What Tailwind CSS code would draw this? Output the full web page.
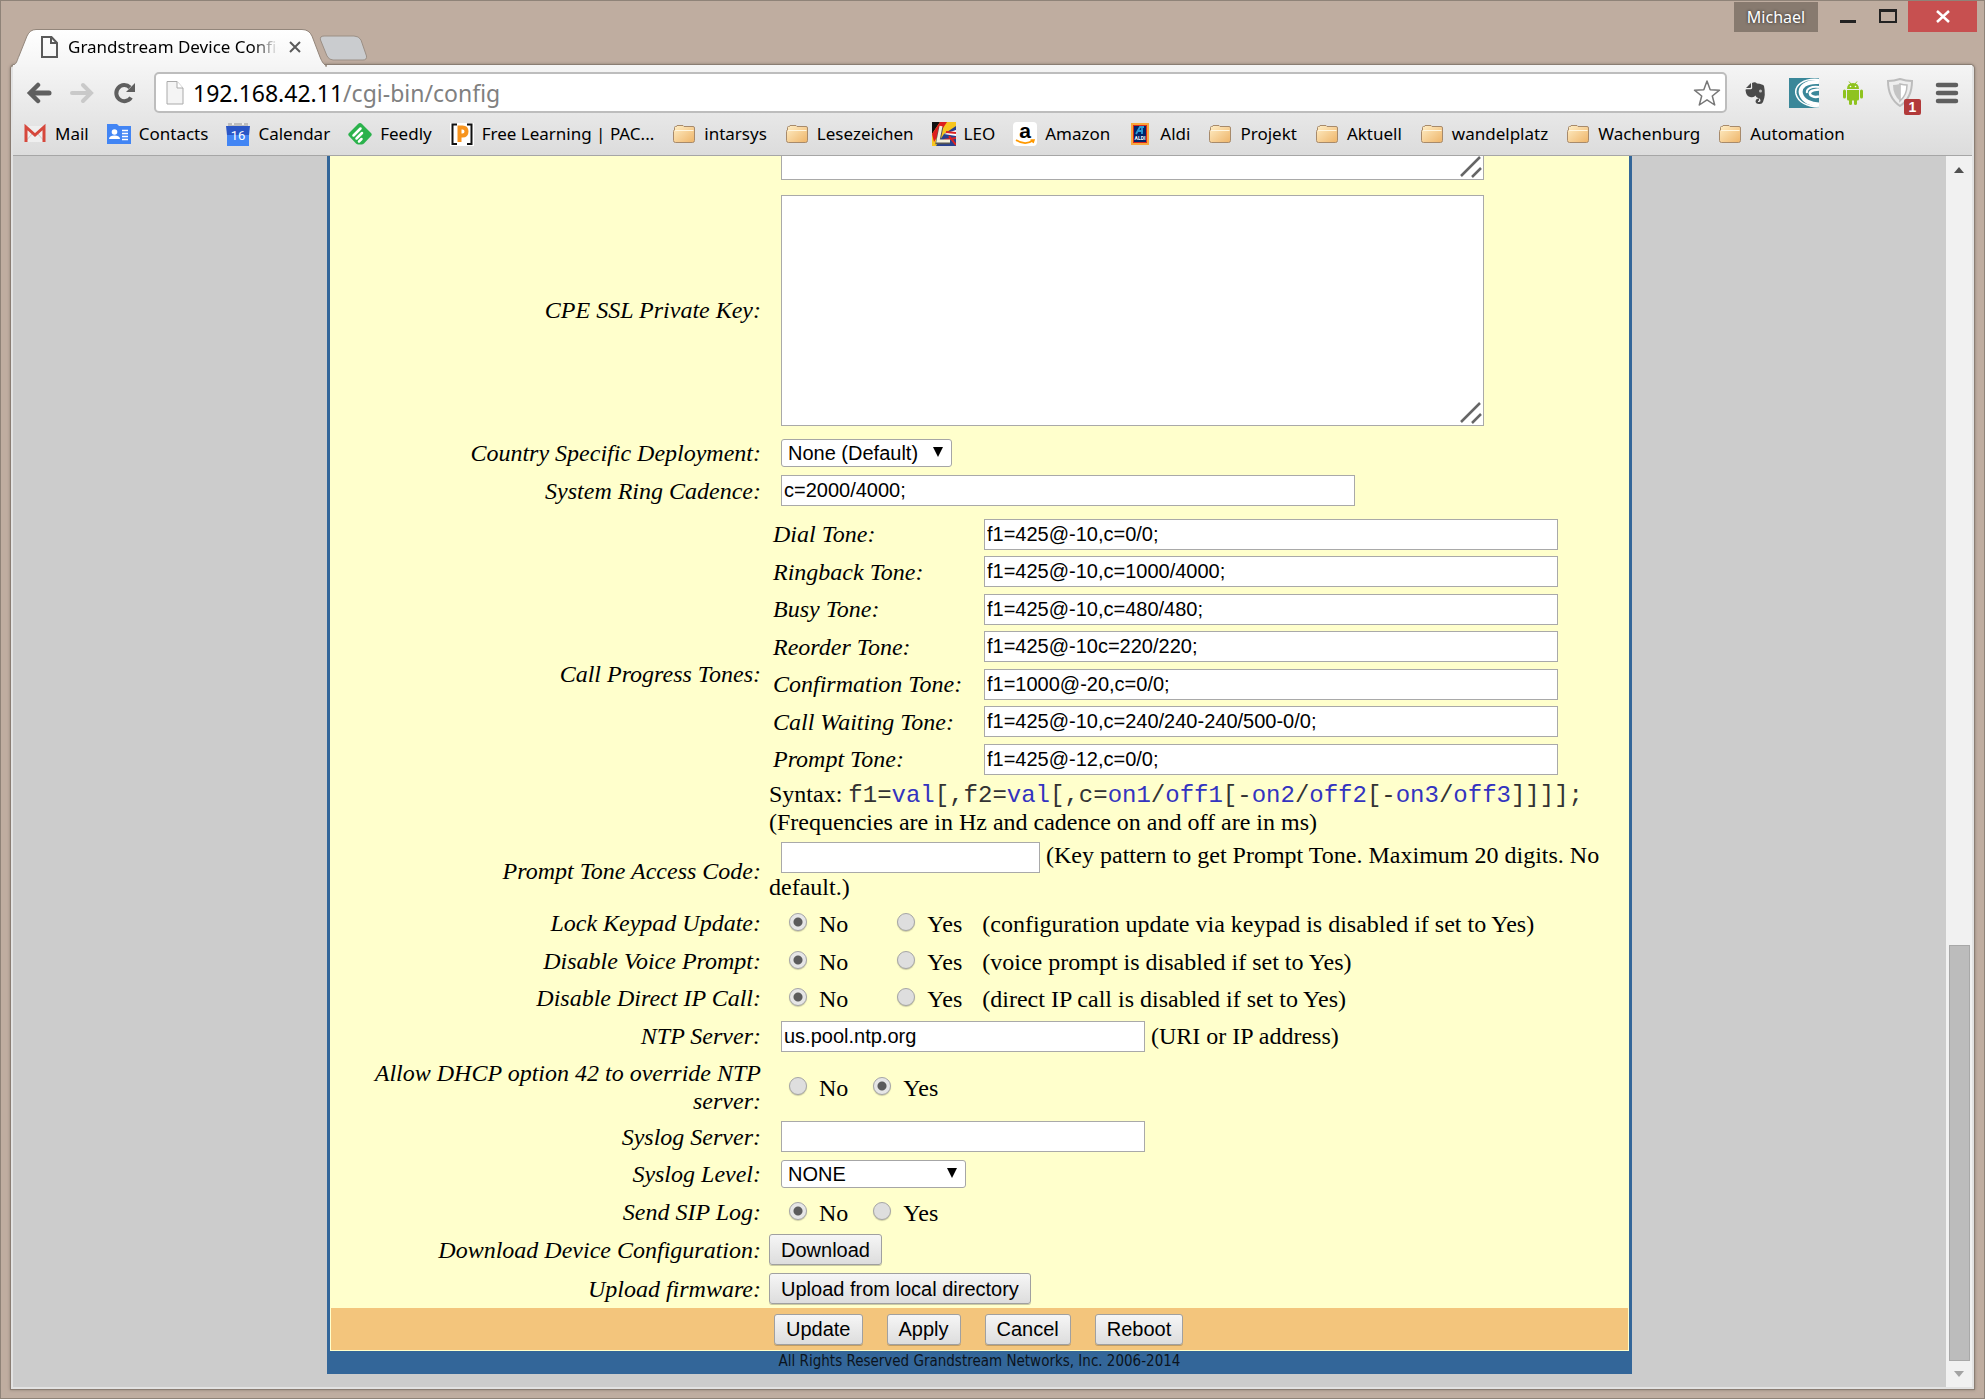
<!DOCTYPE html>
<html lang="en">
<head>
<meta charset="utf-8">
<title>Grandstream Device Configuration</title>
<script src="https://cdn.jsdelivr.net/npm/@tailwindcss/browser@4"></script>
</head>
<body class="bg-[#bfada0]">
<svg class="absolute size-0" aria-hidden="true">
  <defs>
    <linearGradient id="fold" x1="0" y1="0" x2="1" y2="1"><stop offset="0" stop-color="#ffefc8"/><stop offset="1" stop-color="#eeb468"/></linearGradient>
    <linearGradient id="tabfill" x1="0" y1="0" x2="0" y2="1"><stop offset="0" stop-color="#ffffff"/><stop offset="1" stop-color="#f5f5f5"/></linearGradient>
    <symbol id="folder" viewBox="0 0 24 24">
      <path d="M2.500 5.500Q2.500 4.500 3.500 4.500H4.500L5 3.500H11L12 4.500H21Q22.500 4.500 22.500 6V18.500Q22.500 20.500 20.500 20.500H3.500Q1.500 20.500 1.500 18.500V9.500Q1.500 8 2.500 8Z" fill="url(#fold)" stroke="#a78a6b"/>
      <path d="M3 8.500H21.500" stroke="#fff6df" fill="none"/>
    </symbol>
  </defs>
</svg>
<div class="flex min-h-screen flex-col border border-[#8f8378] bg-[#bfada0] font-['Noto_Sans',sans-serif]">
  <!-- Title bar -->
  <header class="flex h-16 shrink-0 items-end justify-between">
    <div class="flex items-end pl-[10px]">
      <div class="relative z-10 flex h-9 w-[316px] items-center pl-[30px]">
        <svg class="absolute left-0 top-0" width="316" height="38" viewBox="0 0 316 38">
          <path d="M0 37C6 36 6 31 8 27L16 7Q19 .5 25 .5H291Q298 .5 301 7L309 28Q312 36 316 37Z" fill="url(#tabfill)" stroke="#93867b"/>
          <path d="M2 37H314" stroke="#f5f5f5" stroke-width="2"/>
        </svg>
        <svg class="relative shrink-0" width="17" height="22" viewBox="0 0 17 22" fill="none" stroke="#5a5a5a" stroke-width="2"><path d="M1 1H10.500L16 7V21H1Z"/><path d="M10 1V7H16"/></svg>
        <span class="relative ml-[10px] w-[210px] overflow-hidden whitespace-nowrap bg-gradient-to-r from-black from-88% to-transparent bg-clip-text text-[17px] leading-6 text-transparent">Grandstream Device Configuration</span>
        <button class="relative ml-[11px]" aria-label="Close tab"><svg width="12" height="12" viewBox="0 0 12 12" stroke="#5a5a5a" stroke-width="2"><path d="M1 1L11 11M11 1L1 11"/></svg></button>
      </div>
      <button class="-ml-2 mb-1" aria-label="New tab"><svg width="49" height="26" viewBox="0 0 49 26"><path d="M5 1H35Q40 1 42 5L47.500 21Q48 25 44 25H14Q10 25 8 21L1.500 5Q.5 1 5 1Z" fill="#cacccf" stroke="#9b8f85"/></svg></button>
    </div>
    <div class="flex self-start pr-[7px]">
      <button class="mt-px h-[30px] w-[84px] bg-[#877a6f] text-[16px] leading-[30px] text-white [text-shadow:0_0_3px_#222]">Michael</button>
      <button class="ml-[22px]" aria-label="Minimize"><svg width="16" height="31" viewBox="0 0 16 31"><path d="M0 19H16V22H0Z" fill="#222"/></svg></button>
      <button class="ml-[23px]" aria-label="Maximize"><svg width="18" height="31" viewBox="0 0 18 31"><path d="M1 9V21H17V9Z" fill="none" stroke="#222" stroke-width="2"/><path d="M0 8H18V11H0Z" fill="#222"/></svg></button>
      <button class="ml-[11px] flex h-[31px] w-[69px] items-center justify-center bg-[#c75050]" aria-label="Close"><svg width="14" height="13" viewBox="0 0 14 13" stroke="#fff" stroke-width="2.500"><path d="M1 1L13 12M13 1L1 12"/></svg></button>
    </div>
  </header>

  <div class="mx-[10px] mb-[9px] flex grow flex-col rounded-t border-x-2 border-b-2 border-[#e2e2e2] shadow-[0_0_0_1px_#8a7d73,0_0_3px_1px_#8a7d73]">
    <!-- Toolbar -->
    <div class="h-[91px] shrink-0 border-b border-[#a6a6a6] bg-gradient-to-b from-[#f5f5f5] to-[#dcdcdc] pt-[7px]">
      <div class="flex items-center pl-3 pr-[13px]">
        <div class="flex gap-[15px] pr-[15px]">
          <button class="flex w-7 justify-center" aria-label="Back"><svg width="26" height="22" viewBox="0 0 26 22" fill="none" stroke="#5f5f5f" stroke-width="5" stroke-linecap="round" stroke-linejoin="miter"><path d="M6 11H23"/><path d="M12 3L4 11L12 19" stroke-width="4.500"/></svg></button>
          <button class="flex w-7 justify-center" aria-label="Forward"><svg width="26" height="22" viewBox="0 0 26 22" fill="none" stroke="#c9c9c9" stroke-width="4" stroke-linecap="round"><path d="M3 11H20"/><path d="M14 3L22 11L14 19"/></svg></button>
          <button class="flex w-7 justify-center" aria-label="Reload"><svg width="24" height="22" viewBox="0 0 24 22"><path d="M18 15.500A8 8 0 1 1 17 5.500" fill="none" stroke="#5f5f5f" stroke-width="4"/><path d="M22 1V10H13Z" fill="#5f5f5f"/></svg></button>
        </div>
        <div class="flex h-[41px] grow items-center rounded-[5px] border-2 border-[#bdbdbd] bg-white pl-[10px] pr-1">
          <svg class="shrink-0" width="18" height="24" viewBox="0 0 18 24" fill="#f4f4f4" stroke="#aaa"><path d="M1 .5H11L17 7V23H1Z"/><path d="M11 .5V7H17" fill="#fff"/></svg>
          <div class="ml-[9px] grow text-[23px] leading-8 text-[#808080]" role="textbox" aria-label="Address"><span class="text-black">192.168.42.11</span>/cgi-bin/config</div>
          <button aria-label="Bookmark this page"><svg width="28" height="28" viewBox="0 0 28 28" fill="#fff" stroke="#777" stroke-width="1.500" stroke-linejoin="round"><path d="M14 2L17.200 10.800L26.500 11.200L19.300 17L21.700 26L14 20.800L6.300 26L8.700 17L1.500 11.200L10.800 10.800Z"/></svg></button>
        </div>
        <div class="ml-4 flex items-center gap-[22px]">
          <button aria-label="Evernote"><svg width="24" height="24" viewBox="0 0 24 24" fill="#4a4a4a"><path d="M3 7L8 2V6Q8 7 7 7ZM9 2Q12 .5 14 2.500Q20 3 21 5Q23 14 20 21Q19 23.500 16 23Q12.500 23 12.500 20Q13 17 16 17.500V19.500Q14.500 19.500 15 21Q18 21.500 17.500 19Q17 17 14 16.500Q13 16 12.500 14.500Q11 17 7 16Q3 15 2.500 9Q2.500 8.200 3.500 8.200H8Q9.200 8 9.200 7Z"/><circle cx="17.500" cy="10" r="1.500" fill="#bbb"/></svg></button>
          <button aria-label="Extension"><svg width="30" height="30" viewBox="0 0 30 30"><path d="M0 0H30V30H0Z" fill="#3a8799"/><g fill="none" stroke="#fff"><path d="M30 1.500C15 0 5 7 7 16C9 24 18 28.500 30 29" stroke-width="1.500"/><path d="M30 4C17 3 10 9 12 16C14 23 22 26.500 30 26.500" stroke-width="4"/><path d="M30 9C22 8 17 11 18 15" stroke-width="2"/><path d="M30 18.500C25 20 20 17.500 21 14.500C23 11.500 27 12 30 11.500" stroke-width="2.500"/></g></svg></button>
          <button aria-label="Android"><svg width="24" height="26" viewBox="0 0 24 26" fill="#8fc31f"><path d="M6 9Q6 3 12 3T18 9ZM6 10H18V19Q18 20.500 16.500 20.500H7.500Q6 20.500 6 19Z"/><path d="M8 1.500L10 4M16 1.500L14 4" stroke="#8fc31f"/><rect x="2" y="9.500" width="3" height="9" rx="1.500"/><rect x="19" y="9.500" width="3" height="9" rx="1.500"/><rect x="8" y="18" width="3" height="7" rx="1.500"/><rect x="13" y="18" width="3" height="7" rx="1.500"/><circle cx="9.500" cy="6.500" r=".8" fill="#fff"/><circle cx="14.500" cy="6.500" r=".8" fill="#fff"/></svg></button>
          <button class="relative" aria-label="Blocker"><svg width="26" height="29" viewBox="0 0 26 29"><path d="M13 1Q19 3 25 3Q25 20 13 28Q1 20 1 3Q7 3 13 1Z" fill="#eee" stroke="#bcbcbc" stroke-width="2"/><path d="M13 6Q17 7 20 7Q20 17 13 23Z" fill="#fff" stroke="#bcbcbc" stroke-width="1.500"/><path d="M13 6Q9 7 6 7Q6 17 13 23Z" fill="#c4c4c4"/></svg>
            <span class="absolute -bottom-2 -right-2 h-4 w-[17px] rounded-[2px] bg-[#b23a3a] text-center font-['Liberation_Sans'] text-[14px] font-bold leading-4 text-white">1</span></button>
          <button aria-label="Menu"><svg width="24" height="22" viewBox="0 0 24 22" stroke="#5f5f5f" stroke-width="4.500" stroke-linecap="round"><path d="M3 3H21M3 11H21M3 19H21"/></svg></button>
        </div>
      </div>
      <!-- Bookmarks -->
      <nav class="mt-[9px] flex gap-[18px] whitespace-nowrap pl-[10px] text-[17px] leading-6 text-black">
        <a href="#" class="flex gap-2"><svg width="24" height="24" viewBox="0 0 24 24"><path d="M2 4H22V20H2Z" fill="#efefef"/><path d="M2 20L9 12M22 20L15 12" stroke="#ccc"/><path d="M3 20V5L12 13L21 5V20" fill="none" stroke="#d6483c" stroke-width="3"/></svg>Mail</a>
        <a href="#" class="flex gap-2"><svg width="24" height="24" viewBox="0 0 24 24"><path d="M0 2H10L12 4H24V22H0Z" fill="#4285f4"/><circle cx="7.500" cy="10" r="2.800" fill="#fff"/><path d="M2 17Q2 13.500 7.500 13.500T13 17Z" fill="#fff"/><path d="M15 8.500H21M15 11.500H21M15 14.500H21M15 17.500H21" stroke="#fff" stroke-width="1.300"/></svg>Contacts</a>
        <a href="#" class="flex gap-2"><svg width="24" height="24" viewBox="0 0 24 24"><path d="M2 1H22V5H2Z" fill="#bdbdbd"/><circle cx="7" cy="2" r="1" fill="#fff"/><circle cx="17" cy="2" r="1" fill="#fff"/><path d="M0 4H24L23 13H1Z" fill="#2a56c6"/><path d="M1 13H23V24H1Z" fill="#4285f4"/><text x="12" y="18" font-size="13" text-anchor="middle" fill="#fff" font-family="Roboto">16</text></svg>Calendar</a>
        <a href="#" class="flex gap-2"><svg width="24" height="24" viewBox="0 0 24 24"><path d="M10 2Q12 0 14 2L23 11Q24.500 12.500 23 14L16 21.500Q15 22.500 13.500 22.500H10.500Q9 22.500 8 21.500L1 14Q-.5 12.500 1 11Z" fill="#2bb24c"/><path d="M5.500 13.500L12.500 6.500M8.500 16.500L14 11M11 19.500L13.500 17" stroke="#fff" stroke-width="2.500" stroke-linecap="round"/></svg>Feedly</a>
        <a href="#" class="flex gap-2"><svg width="24" height="24" viewBox="0 0 24 24"><path d="M0 1H24V24H0Z" fill="#fff"/><path d="M7 2.500H2.500V22H7M17 2.500H21.500V22H17" fill="none" stroke="#111" stroke-width="2"/><path d="M9.500 20V5.500H12.500Q16.500 5.500 16.500 9.500T12.500 13.500H9.500" fill="none" stroke="#f7941e" stroke-width="4"/></svg>Free Learning | PAC...</a>
        <a href="#" class="flex gap-2"><svg width="24" height="24"><use href="#folder"/></svg>intarsys</a>
        <a href="#" class="flex gap-2"><svg width="24" height="24"><use href="#folder"/></svg>Lesezeichen</a>
        <a href="#" class="flex gap-2"><svg width="24" height="24" viewBox="0 0 24 24"><path d="M0 0H24V24H0Z" fill="#f7c51e"/><path d="M0 0H8L0 12Z" fill="#111"/><path d="M8 0H15L2 20L0 12Z" fill="#dd1e1e"/><path d="M12 12L24 4V24H4Z" fill="#27408f"/><path d="M12 12L24 8V14Z" fill="#fff"/><path d="M14 10L24 11M12 18L24 16M17 14L24 23" stroke="#d22" stroke-width="2"/><path d="M9 5L6 20H18" fill="none" stroke="#555" stroke-width="4.500"/><path d="M9 4L6 19H18" fill="none" stroke="#f3f0dd" stroke-width="3"/></svg>LEO</a>
        <a href="#" class="flex gap-2"><svg width="24" height="24" viewBox="0 0 24 24"><rect width="24" height="24" rx="4" fill="#fff"/><text x="12" y="16" font-size="21" font-weight="bold" text-anchor="middle" fill="#000" font-family="Liberation Sans">a</text><path d="M3 18Q12 24 20 18.500M17.500 18H21L20 21" fill="none" stroke="#f90" stroke-width="1.600"/></svg>Amazon</a>
        <a href="#" class="flex gap-2"><svg width="24" height="24" viewBox="0 0 24 24"><path d="M3 1H21V23H3Z" fill="#f9a63a"/><path d="M5 3H19V21H5Z" fill="#d5281e"/><path d="M6 4H18V20H6Z" fill="#00236a"/><path d="M8 12L12 5H16M10 9H15M14 12V5" stroke="#2b9bd7" stroke-width="1.800" fill="none"/><text x="12" y="18" font-size="5" font-weight="bold" text-anchor="middle" fill="#fff" font-family="Roboto">ALDI</text></svg>Aldi</a>
        <a href="#" class="flex gap-2"><svg width="24" height="24"><use href="#folder"/></svg>Projekt</a>
        <a href="#" class="flex gap-2"><svg width="24" height="24"><use href="#folder"/></svg>Aktuell</a>
        <a href="#" class="flex gap-2"><svg width="24" height="24"><use href="#folder"/></svg>wandelplatz</a>
        <a href="#" class="flex gap-2"><svg width="24" height="24"><use href="#folder"/></svg>Wachenburg</a>
        <a href="#" class="flex gap-2"><svg width="24" height="24"><use href="#folder"/></svg>Automation</a>
      </nav>
    </div>

    <!-- Page -->
    <div class="flex grow bg-[#ccc]">
      <main class="min-w-0 grow">
        <div class="mx-auto w-full max-w-[1305px] border-[3px] border-t-0 border-[#369] bg-[#ffc] font-['Liberation_Serif',serif] text-[24px] leading-7 text-black">
          <table class="w-full table-fixed border-collapse [&>tbody>tr>th]:pr-1 [&>tbody>tr>th]:text-right [&>tbody>tr>td]:pl-1 [&_th]:font-normal [&_th]:italic [&_th]:p-0 [&_td]:p-0">
            <colgroup><col class="w-[435px]"><col></colgroup>
            <tbody>
            <tr class="h-[30px]"><th></th><td class="align-top"><div class="relative ml-3 w-[703px]"><textarea class="block h-6 w-full resize-none border border-t-0 border-[#a9a9a9] bg-white" aria-label="CPE SSL Certificate"></textarea><svg class="absolute bottom-[2px] right-[2px]" width="22" height="22" viewBox="0 0 22 22" stroke="#666" stroke-width="2.500"><path d="M1 20L20 1M12 21L21 12"/></svg></div></td></tr>
            <tr class="h-[248px]"><th scope="row"><label for="key">CPE SSL Private Key:</label></th><td><div class="relative ml-3 w-[703px]"><textarea id="key" class="block h-[231px] w-full resize-none border border-[#a9a9a9] bg-white"></textarea><svg class="absolute bottom-[2px] right-[2px]" width="22" height="22" viewBox="0 0 22 22" stroke="#666" stroke-width="2.500"><path d="M1 20L20 1M12 21L21 12"/></svg></div></td></tr>
            <tr class="h-[38px]"><th scope="row"><label for="country">Country Specific Deployment:</label></th><td><div class="relative ml-3 h-7 w-[171px]"><select id="country" class="block h-7 w-full appearance-none rounded-[3px] border border-[#a6a6a6] bg-white pl-[6px] font-['Liberation_Sans',sans-serif] text-[20px] leading-6"><option>None (Default)</option></select><svg class="pointer-events-none absolute right-[9px] top-2" width="10" height="10"><path d="M0 0H10L5 10Z"/></svg></div></td></tr>
            <tr class="h-[37px]"><th scope="row"><label for="cadence">System Ring Cadence:</label></th><td><input id="cadence" class="ml-3 block h-[31px] w-[574px] border border-[#a9a9a9] bg-white px-[2px] font-['Liberation_Sans',sans-serif] text-[20px]" value="c=2000/4000;"></td></tr>
            <tr class="h-[329px]"><th scope="row">Call Progress Tones:</th><td>
              <table class="mb-[2px] mt-1 border-collapse [&_input]:block [&_input]:h-[31px] [&_input]:w-[574px] [&_input]:border [&_input]:border-[#a9a9a9] [&_input]:bg-white [&_input]:px-[2px] [&_input]:font-['Liberation_Sans',sans-serif] [&_input]:text-[20px] [&_th]:text-left [&_th]:w-[215px] [&_th]:pl-1 [&_tr]:h-[37px] [&_tr:nth-child(odd)]:h-[38px]">
                <tbody>
                <tr><th scope="row"><label for="t1">Dial Tone:</label></th><td><input id="t1" value="f1=425@-10,c=0/0;"></td></tr>
                <tr><th scope="row"><label for="t2">Ringback Tone:</label></th><td><input id="t2" value="f1=425@-10,c=1000/4000;"></td></tr>
                <tr><th scope="row"><label for="t3">Busy Tone:</label></th><td><input id="t3" value="f1=425@-10,c=480/480;"></td></tr>
                <tr><th scope="row"><label for="t4">Reorder Tone:</label></th><td><input id="t4" value="f1=425@-10c=220/220;"></td></tr>
                <tr><th scope="row"><label for="t5">Confirmation Tone:</label></th><td><input id="t5" value="f1=1000@-20,c=0/0;"></td></tr>
                <tr><th scope="row"><label for="t6">Call Waiting Tone:</label></th><td><input id="t6" value="f1=425@-10,c=240/240-240/500-0/0;"></td></tr>
                <tr><th scope="row"><label for="t7">Prompt Tone:</label></th><td><input id="t7" value="f1=425@-12,c=0/0;"></td></tr>
                </tbody>
              </table>
              <p class="h-7 whitespace-nowrap">Syntax: <code class="font-['Liberation_Mono',monospace] text-[24px] text-[#333] [&>i]:not-italic [&>i]:text-[#3333c0]">f1=<i>val</i>[,f2=<i>val</i>[,c=<i>on1</i>/<i>off1</i>[-<i>on2</i>/<i>off2</i>[-<i>on3</i>/<i>off3</i>]]]];</code></p>
              <p>(Frequencies are in Hz and cadence on and off are in ms)</p>
            </td></tr>
            <tr class="h-[66px]"><th scope="row"><label for="code">Prompt Tone Access Code:</label></th><td><input id="code" class="ml-3 h-[31px] w-[259px] border border-[#a9a9a9] bg-white px-[2px] align-middle font-['Liberation_Sans',sans-serif] text-[20px]"> (Key pattern to get Prompt Tone. Maximum 20 digits. No default.)</td></tr>
            <tr class="h-[38px]"><th scope="row">Lock Keypad Update:</th><td><div class="ml-5 flex items-center"><label class="mr-[49px] flex items-center gap-3"><input type="radio" name="lock" checked class="mb-[2px] size-[18px] appearance-none rounded-full border border-[#a6a6a6] bg-[#dedede] shadow-[0_1px_1px_#0003] checked:bg-[radial-gradient(circle,#5c5c5c_4px,#e6e6e6_5px)]"><span class="pt-[2px]">No</span></label><label class="flex items-center gap-3"><input type="radio" name="lock" class="mb-[2px] size-[18px] appearance-none rounded-full border border-[#a6a6a6] bg-[#dedede] shadow-[0_1px_1px_#0003] checked:bg-[radial-gradient(circle,#5c5c5c_4px,#e6e6e6_5px)]"><span class="pt-[2px]">Yes</span></label><span class="ml-5 pt-[2px]">(configuration update via keypad is disabled if set to Yes)</span></div></td></tr>
            <tr class="h-[37px]"><th scope="row">Disable Voice Prompt:</th><td><div class="ml-5 flex items-center"><label class="mr-[49px] flex items-center gap-3"><input type="radio" name="voice" checked class="mb-[2px] size-[18px] appearance-none rounded-full border border-[#a6a6a6] bg-[#dedede] shadow-[0_1px_1px_#0003] checked:bg-[radial-gradient(circle,#5c5c5c_4px,#e6e6e6_5px)]"><span class="pt-[2px]">No</span></label><label class="flex items-center gap-3"><input type="radio" name="voice" class="mb-[2px] size-[18px] appearance-none rounded-full border border-[#a6a6a6] bg-[#dedede] shadow-[0_1px_1px_#0003] checked:bg-[radial-gradient(circle,#5c5c5c_4px,#e6e6e6_5px)]"><span class="pt-[2px]">Yes</span></label><span class="ml-5 pt-[2px]">(voice prompt is disabled if set to Yes)</span></div></td></tr>
            <tr class="h-[38px]"><th scope="row">Disable Direct IP Call:</th><td><div class="ml-5 flex items-center"><label class="mr-[49px] flex items-center gap-3"><input type="radio" name="ip" checked class="mb-[2px] size-[18px] appearance-none rounded-full border border-[#a6a6a6] bg-[#dedede] shadow-[0_1px_1px_#0003] checked:bg-[radial-gradient(circle,#5c5c5c_4px,#e6e6e6_5px)]"><span class="pt-[2px]">No</span></label><label class="flex items-center gap-3"><input type="radio" name="ip" class="mb-[2px] size-[18px] appearance-none rounded-full border border-[#a6a6a6] bg-[#dedede] shadow-[0_1px_1px_#0003] checked:bg-[radial-gradient(circle,#5c5c5c_4px,#e6e6e6_5px)]"><span class="pt-[2px]">Yes</span></label><span class="ml-5 pt-[2px]">(direct IP call is disabled if set to Yes)</span></div></td></tr>
            <tr class="h-[38px]"><th scope="row"><label for="ntp">NTP Server:</label></th><td><div class="ml-3 flex items-center gap-[6px]"><input id="ntp" class="h-[31px] w-[364px] border border-[#a9a9a9] bg-white px-[2px] font-['Liberation_Sans',sans-serif] text-[20px]" value="us.pool.ntp.org"><span>(URI or IP address)</span></div></td></tr>
            <tr class="h-[63px]"><th scope="row">Allow DHCP option 42 to override NTP server:</th><td><div class="ml-5 flex items-center"><label class="mr-[25px] flex items-center gap-3"><input type="radio" name="dhcp" class="mb-[2px] size-[18px] appearance-none rounded-full border border-[#a6a6a6] bg-[#dedede] shadow-[0_1px_1px_#0003] checked:bg-[radial-gradient(circle,#5c5c5c_4px,#e6e6e6_5px)]"><span class="pt-[2px]">No</span></label><label class="flex items-center gap-3"><input type="radio" name="dhcp" checked class="mb-[2px] size-[18px] appearance-none rounded-full border border-[#a6a6a6] bg-[#dedede] shadow-[0_1px_1px_#0003] checked:bg-[radial-gradient(circle,#5c5c5c_4px,#e6e6e6_5px)]"><span class="pt-[2px]">Yes</span></label></div></td></tr>
            <tr class="h-[37px]"><th scope="row"><label for="syslog">Syslog Server:</label></th><td><input id="syslog" class="ml-3 block h-[31px] w-[364px] border border-[#a9a9a9] bg-white px-[2px] font-['Liberation_Sans',sans-serif] text-[20px]"></td></tr>
            <tr class="h-[38px]"><th scope="row"><label for="level">Syslog Level:</label></th><td><div class="relative ml-3 h-7 w-[185px]"><select id="level" class="block h-7 w-full appearance-none rounded-[3px] border border-[#a6a6a6] bg-white pl-[6px] font-['Liberation_Sans',sans-serif] text-[20px] leading-6"><option>NONE</option></select><svg class="pointer-events-none absolute right-[9px] top-2" width="10" height="10"><path d="M0 0H10L5 10Z"/></svg></div></td></tr>
            <tr class="h-[37px]"><th scope="row">Send SIP Log:</th><td><div class="ml-5 flex items-center"><label class="mr-[25px] flex items-center gap-3"><input type="radio" name="sip" checked class="mb-[2px] size-[18px] appearance-none rounded-full border border-[#a6a6a6] bg-[#dedede] shadow-[0_1px_1px_#0003] checked:bg-[radial-gradient(circle,#5c5c5c_4px,#e6e6e6_5px)]"><span class="pt-[2px]">No</span></label><label class="flex items-center gap-3"><input type="radio" name="sip" class="mb-[2px] size-[18px] appearance-none rounded-full border border-[#a6a6a6] bg-[#dedede] shadow-[0_1px_1px_#0003] checked:bg-[radial-gradient(circle,#5c5c5c_4px,#e6e6e6_5px)]"><span class="pt-[2px]">Yes</span></label></div></td></tr>
            <tr class="h-[39px]"><th scope="row">Download Device Configuration:</th><td><button class="block h-[31px] rounded-[3px] border border-[#a0a0a0] bg-gradient-to-b from-[#f6f6f6] to-[#dddddd] px-[11px] font-['Liberation_Sans',sans-serif] text-[20px] leading-7 shadow-[0_1px_0_#0003]">Download</button></td></tr>
            <tr class="h-[39px]"><th scope="row">Upload firmware:</th><td><button class="block h-[31px] rounded-[3px] border border-[#a0a0a0] bg-gradient-to-b from-[#f6f6f6] to-[#dddddd] px-[11px] font-['Liberation_Sans',sans-serif] text-[20px] leading-7 shadow-[0_1px_0_#0003]">Upload from local directory</button></td></tr>
            </tbody>
          </table>
          <div class="mx-px mb-px flex h-[42px] items-center gap-6 bg-[#f3c57c] pl-[443px]">
            <button class="h-[31px] rounded-[3px] border border-[#a0a0a0] bg-gradient-to-b from-[#f6f6f6] to-[#dddddd] px-[11px] font-['Liberation_Sans',sans-serif] text-[20px] leading-7 shadow-[0_1px_0_#0003]">Update</button>
            <button class="h-[31px] rounded-[3px] border border-[#a0a0a0] bg-gradient-to-b from-[#f6f6f6] to-[#dddddd] px-[11px] font-['Liberation_Sans',sans-serif] text-[20px] leading-7 shadow-[0_1px_0_#0003]">Apply</button>
            <button class="h-[31px] rounded-[3px] border border-[#a0a0a0] bg-gradient-to-b from-[#f6f6f6] to-[#dddddd] px-[11px] font-['Liberation_Sans',sans-serif] text-[20px] leading-7 shadow-[0_1px_0_#0003]">Cancel</button>
            <button class="h-[31px] rounded-[3px] border border-[#a0a0a0] bg-gradient-to-b from-[#f6f6f6] to-[#dddddd] px-[11px] font-['Liberation_Sans',sans-serif] text-[20px] leading-7 shadow-[0_1px_0_#0003]">Reboot</button>
          </div>
          <footer class="bg-[#369] text-center font-['DejaVu_Sans_Condensed','DejaVu_Sans',sans-serif] text-[15px] leading-5 text-[#0b1420]">All Rights Reserved Grandstream Networks, Inc. 2006-2014</footer>
        </div>
      </main>
      <!-- Scroll bar -->
      <div class="flex w-[26px] shrink-0 flex-col items-center bg-[#f1f1f1]" aria-hidden="true">
        <svg class="shrink-0" width="26" height="26" viewBox="0 0 26 26"><path d="M8 17L13 11L18 17Z" fill="#505050"/></svg>
        <div class="grow-[764]"></div>
        <div class="w-[21px] grow-[415] border border-[#a8a8a8] bg-[#bcbcbc]"></div>
        <svg class="shrink-0" width="26" height="26" viewBox="0 0 26 26"><path d="M8 10L13 16L18 10Z" fill="#a3a3a3"/></svg>
      </div>
    </div>
  </div>
</div>
</body>
</html>
